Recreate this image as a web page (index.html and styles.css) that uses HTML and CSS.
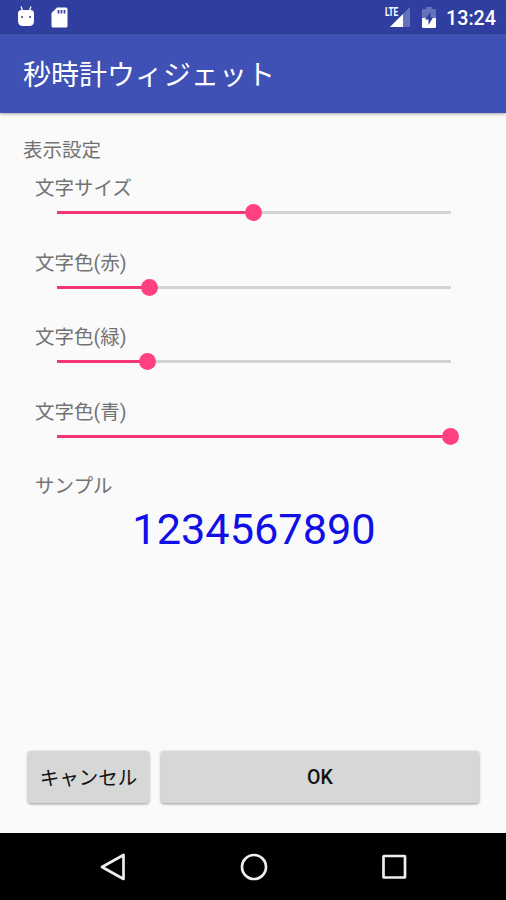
FILE: index.html
```html
<!DOCTYPE html>
<html lang="ja">
<head>
  <meta charset="UTF-8">
  <meta name="viewport" content="width=device-width, initial-scale=1">
  <title>秒時計ウィジェット</title>
  <link rel="stylesheet" href="styles.css">
</head>
<body>
  <!-- ステータスバー -->
  <div class="statusbar">
    <svg class="icon-debug" width="18" height="21" viewBox="0 0 18 21">
      <path d="M4 0.500l1.500 4M14 0.500l-1.500 4" stroke="#fff" stroke-width="1.300"/>
      <path d="M1 10V7.500Q1 4 4.500 4h9Q17 4 17 7.500V10z" fill="#fff"/>
      <path d="M1 9.500h16V15q0 5-5 5H6q-5 0-5-5z" fill="#fff"/>
      <circle cx="5" cy="11" r="1" fill="#303f9f"/>
      <circle cx="13" cy="11" r="1" fill="#303f9f"/>
    </svg>
    <svg class="icon-sd" width="17" height="21" viewBox="0 0 17 21">
      <path d="M6 0.500h9q1.500 0 1.500 1.500v17q0 1.500-1.500 1.500H2Q0.500 20.500 0.500 19V6z" fill="#fff"/>
      <path d="M7.500 3v3.500M10.500 3v3.500M13.500 3v3.500" stroke="#303f9f" stroke-width="1.700"/>
    </svg>
    <div class="signal">
      <span class="lte">LTE</span>
      <svg width="20" height="20" viewBox="0 0 20 20">
        <path d="M20 0v20H0z" fill="#6672ba"/>
        <path d="M13 7v13H0z" fill="#fff"/>
      </svg>
    </div>
    <svg class="icon-battery" width="14" height="21" viewBox="0 0 14 21">
      <path d="M4 0h6v2h2.500q1.500 0 1.500 1.500V11H0V3.500Q0 2 1.500 2H4z" fill="#6672ba"/>
      <path d="M0 11h14v8.500q0 1.500-1.500 1.500h-11Q0 21 0 19.500z" fill="#fff"/>
      <path d="M8.500 5L3 12.500h3.500V18L11 10.500H8.500z" fill="#303f9f"/>
    </svg>
    <span class="clock">13:24</span>
  </div>

  <!-- タイトル -->
  <header class="appbar">
    <h1>秒時計ウィジェット</h1>
  </header>

  <!-- 設定 -->
  <main class="content">
    <h2>表示設定</h2>
    <div class="settings">
      <div class="row">
        <div class="label">文字サイズ</div>
        <div class="slider">
          <div class="fill" style="width: 50%"><span class="thumb"></span></div>
        </div>
      </div>
      <div class="row">
        <div class="label">文字色(赤)</div>
        <div class="slider">
          <div class="fill" style="width: 23.6%"><span class="thumb"></span></div>
        </div>
      </div>
      <div class="row">
        <div class="label">文字色(緑)</div>
        <div class="slider">
          <div class="fill" style="width: 23.1%"><span class="thumb"></span></div>
        </div>
      </div>
      <div class="row">
        <div class="label">文字色(青)</div>
        <div class="slider">
          <div class="fill" style="width: 100%"><span class="thumb"></span></div>
        </div>
      </div>
      <div class="label">サンプル</div>
    </div>
    <div class="sample">1234567890</div>
    <div class="buttons">
      <button class="btn btn-cancel">キャンセル</button>
      <button class="btn btn-ok">OK</button>
    </div>
  </main>

  <!-- ナビゲーションバー -->
  <nav class="navbar">
    <svg width="28" height="28" viewBox="0 0 28 28">
      <path d="M24.500 2v24L3 14z"/>
    </svg>
    <svg width="28" height="28" viewBox="0 0 28 28">
      <circle cx="14" cy="14" r="12"/>
    </svg>
    <svg width="28" height="28" viewBox="0 0 28 28">
      <rect x="3.500" y="3" width="21.500" height="21.500" rx="0.500"/>
    </svg>
  </nav>
</body>
</html>
```
FILE: styles.css
```css
* {
  box-sizing: border-box;
}

body {
  margin: 0;
  height: 900px;
  display: flex;
  flex-direction: column;
  overflow: hidden;
  background: #fafafa;
  color: #737373;
  font-family: Roboto, "Noto Sans CJK JP", sans-serif;
}

/* ステータスバー */
.statusbar {
  display: flex;
  align-items: flex-start;
  height: 34px;
  padding: 7px 10px 0 17px;
  background: #303f9f;
  color: #fff;
}

.icon-debug {
  margin-top: -1px;
}

.icon-sd {
  margin-left: 16px;
}

.signal {
  position: relative;
  height: 20px;
  margin-left: auto;
}

.signal svg {
  display: block;
}

.lte {
  position: absolute;
  left: -5px;
  top: -1px;
  font-size: 12px;
  line-height: 12px;
  font-weight: 700;
  transform: scaleX(0.68);
  transform-origin: left;
}

.icon-battery {
  margin-left: 12px;
}

.clock {
  margin-left: 10px;
  font-size: 19.7px;
  line-height: 24px;
  font-weight: 500;
}

/* タイトル */
.appbar {
  display: flex;
  align-items: center;
  height: 79px;
  padding: 4px 0 0 23px;
  background: #3f51b5;
  box-shadow: 0 1px 3px rgba(0, 0, 0, 0.35);
}

.appbar h1 {
  margin: 0;
  color: #fff;
  font-size: 28px;
  line-height: 40px;
  font-weight: 400;
}

/* 設定 */
.content {
  flex: 1;
  display: flex;
  flex-direction: column;
  padding: 24px 23px 30px;
}

.content h2 {
  margin: 0;
  font-size: 19.5px;
  line-height: 28px;
  font-weight: 400;
}

.settings {
  padding: 10px 32.5px 0 12px;
}

.row {
  height: 74.6px;
}

.label {
  font-size: 19.5px;
  line-height: 28px;
}

.slider {
  height: 3px;
  margin: 8px 0 0 21.5px;
  background: #d3d3d3;
}

.fill {
  position: relative;
  height: 3px;
  background: #f23577;
}

.thumb {
  position: absolute;
  right: -8.5px;
  top: -7px;
  width: 17px;
  height: 17px;
  border-radius: 50%;
  background: #ff4081;
}

.sample {
  margin-top: 3px;
  padding-left: 2px;
  color: #0f0fe6;
  font-size: 43.3px;
  line-height: 52px;
  text-align: center;
}

.buttons {
  display: flex;
  gap: 12px;
  margin-top: auto;
  padding: 0 4px 0 5px;
}

.btn {
  height: 52px;
  padding: 0;
  border: none;
  border-radius: 3px;
  background: #d6d7d7;
  box-shadow: 0 1px 3px rgba(0, 0, 0, 0.4);
  color: #111;
  font-family: inherit;
  font-size: 19.5px;
  font-weight: 500;
}

.btn-cancel {
  width: 121px;
  padding-bottom: 2px;
  font-weight: 400;
}

.btn-ok {
  flex: 1;
}

/* ナビゲーションバー */
.navbar {
  display: flex;
  justify-content: center;
  gap: 112.5px;
  height: 67px;
  padding: 20px 0 0 1px;
  background: #000;
}

.navbar svg {
  fill: none;
  stroke: #eee;
  stroke-width: 2.7;
  stroke-linejoin: round;
}
```
